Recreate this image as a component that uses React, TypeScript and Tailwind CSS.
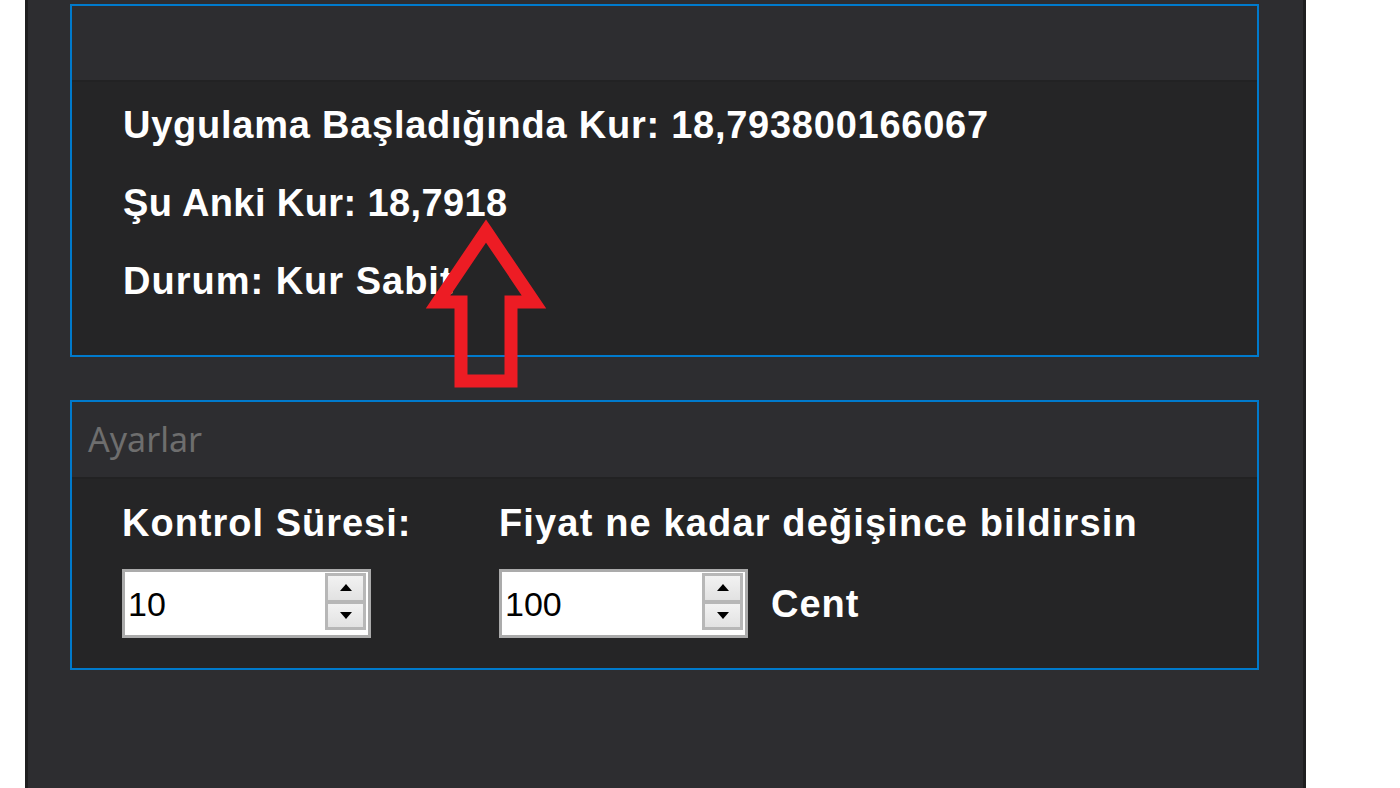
import React from 'react';

const SpinBox: React.FC<{ value: string }> = ({ value }) => (
  <div className="flex w-[249px] h-[69px] border-[3px] border-[#ababab] bg-white">
    <div className="flex-1 flex items-center pl-[3px] text-[34px] leading-none text-black font-normal tracking-normal">
      {value}
    </div>
    <div className="w-[41px] mt-[1px] mb-[5px] mr-[2px] border-[3px] border-[#b7b7b7] bg-[#b7b7b7] flex flex-col gap-[4px]">
      <div className="flex-1 flex items-center justify-center bg-gradient-to-b from-[#f2f2f2] to-[#e2e2e2]">
        <svg width="12" height="7" viewBox="0 0 12 7">
          <polygon points="6,0 12,7 0,7" fill="#000" />
        </svg>
      </div>
      <div className="flex-1 flex items-center justify-center bg-gradient-to-b from-[#f2f2f2] to-[#e2e2e2]">
        <svg width="12" height="7" viewBox="0 0 12 7">
          <polygon points="0,0 12,0 6,7" fill="#000" />
        </svg>
      </div>
    </div>
  </div>
);

const App: React.FC = () => {
  return (
    <div
      className="relative flex w-[1400px] h-[788px] bg-white overflow-hidden"
      style={{ fontFamily: '"Liberation Sans", Arial, sans-serif' }}
    >
      <div className="ml-[25px] w-[1281px] h-full bg-[#2d2d30] border-x-[3px] border-[#1f1f20] pt-[4px] pl-[42px]">
        {/* Kur bilgisi */}
        <div className="w-[1189px] h-[353px] border-2 border-[#007acc] flex flex-col">
          <div className="h-[74px] bg-[#2d2d30]" />
          <div className="h-[2px] bg-[#222223]" />
          <div className="flex-1 bg-[#252526] pl-[51px] pt-[4px] text-white font-bold text-[38px] leading-[78px]">
            <p className="tracking-[0.75px]">Uygulama Başladığında Kur: 18,793800166067</p>
            <p className="tracking-[0.4px]">Şu Anki Kur: 18,7918</p>
            <p className="tracking-[1px]">Durum: Kur Sabit</p>
          </div>
        </div>

        {/* Ayarlar */}
        <div className="mt-[43px] w-[1189px] h-[270px] border-2 border-[#007acc] flex flex-col">
          <div
            className="h-[75px] bg-[#2d2d30] flex items-center pl-[16px] text-[34px] text-[#6e6e6e]"
            style={{ fontFamily: '"Noto Sans", "Open Sans", sans-serif' }}
          >
            Ayarlar
          </div>
          <div className="h-[2px] bg-[#222223]" />
          <div className="flex-1 bg-[#252526] pl-[50px] pt-[21px] flex text-white font-bold text-[38px] leading-[46px]">
            <div className="w-[377px]">
              <p className="tracking-[1px]">Kontrol Süresi:</p>
              <div className="mt-[23px]">
                <SpinBox value="10" />
              </div>
            </div>
            <div>
              <p className="tracking-[1.15px]">Fiyat ne kadar değişince bildirsin</p>
              <div className="mt-[23px] flex items-center">
                <SpinBox value="100" />
                <span className="ml-[23px] tracking-[1px]">Cent</span>
              </div>
            </div>
          </div>
        </div>
      </div>

      {/* kırmızı ok */}
      <svg className="absolute left-0 top-0 pointer-events-none" width="1400" height="788" viewBox="0 0 1400 788">
        <polygon
          points="486,231 534,302 511,302 511,381 461,381 461,302 438,302"
          fill="none"
          stroke="#ed1c24"
          strokeWidth="13"
          strokeLinejoin="miter"
          strokeMiterlimit="10"
        />
      </svg>
    </div>
  );
};

export default App;
